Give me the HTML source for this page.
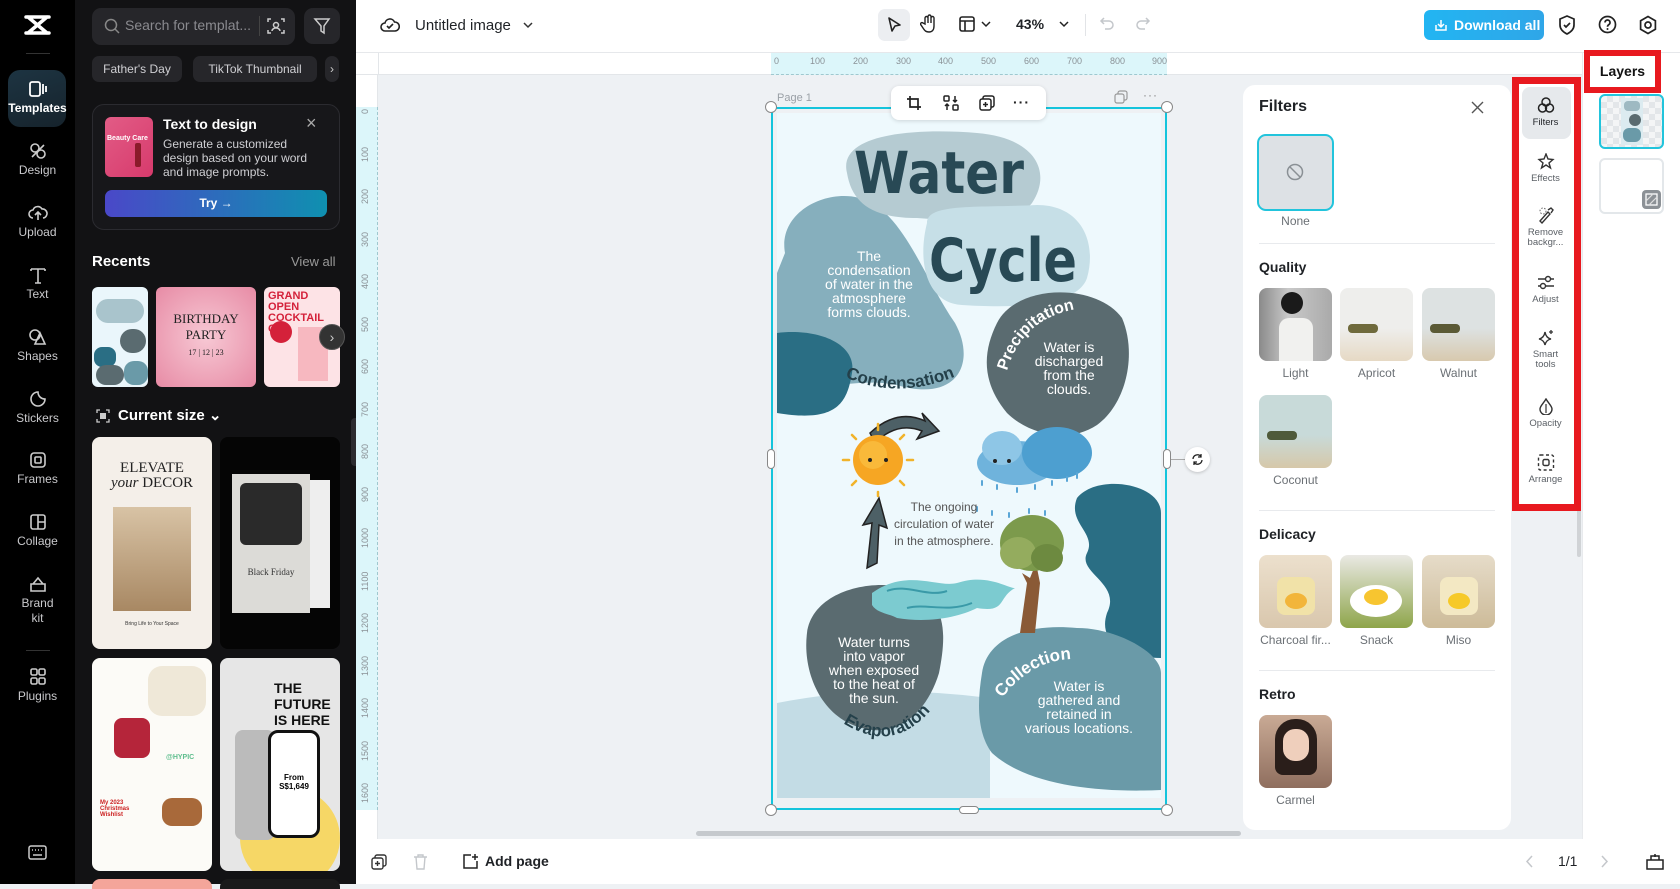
<!DOCTYPE html>
<html><head><meta charset="utf-8">
<style>
*{box-sizing:border-box;margin:0;padding:0}
body{width:1680px;height:884px;overflow:hidden;font-family:"Liberation Sans",sans-serif;background:#eef1f4;position:relative}
.a{position:absolute}
.rail{left:0;top:0;width:75px;height:884px;background:#000}
.nav{position:absolute;left:0;width:75px;text-align:center;color:#c9c9cc;font-size:12px}
.nav svg{display:block;margin:0 auto 3px}
.side{left:75px;top:0;width:281px;height:884px;background:#121214}
.chip{position:absolute;top:56px;height:26px;border-radius:7px;background:#26262a;color:#d0d0d4;font-size:12px;line-height:26px;text-align:center}
.top{left:356px;top:0;width:1324px;height:53px;background:#fff;border-bottom:1px solid #e6e8eb}
.bot{left:356px;top:839px;width:1324px;height:45px;background:#fff}
.fp{left:1243px;top:85px;width:268px;height:745px;background:#fff;border-radius:12px}
.lbl{position:absolute;font-size:12px;color:#6b7075;text-align:center;width:73px}
.th{position:absolute;width:73px;height:73px;border-radius:8px;overflow:hidden}
.h3{position:absolute;left:16px;font-size:14px;font-weight:bold;color:#1f2226}
.dv{position:absolute;left:16px;width:236px;height:1px;background:#e8eaed}
.tl{position:absolute;left:0;width:53px;text-align:center;font-size:9.5px;color:#5b6066;line-height:10px}
.tl svg{display:block;margin:0 auto 4px}
</style></head><body>

<!-- left rail -->
<div class="a rail">
  <svg class="a" style="left:24px;top:14px" width="27" height="22" viewBox="0 0 27 22"><path d="M2 3h23M2 19h23M4 3l19 16M23 3L4 19" stroke="#fff" stroke-width="3.5" fill="none" stroke-linecap="round"/></svg>
  <div class="a" style="left:26px;top:53px;width:24px;height:1px;background:#333"></div>
  <div class="a" style="left:8px;top:70px;width:58px;height:57px;border-radius:12px;background:linear-gradient(160deg,#1d3442,#16232c)"></div>
  <div class="nav" style="top:80px;color:#fff;font-weight:bold"><svg width="20" height="18" viewBox="0 0 20 18"><rect x="2" y="2" width="10" height="14" rx="2" stroke="#fff" stroke-width="1.8" fill="none"/><path d="M15 4v10M18 6v6" stroke="#fff" stroke-width="1.8"/></svg>Templates</div>
  <div class="nav" style="top:142px"><svg width="20" height="18" viewBox="0 0 20 18"><circle cx="7" cy="6" r="4" stroke="#ccc" stroke-width="1.6" fill="none"/><circle cx="13" cy="12" r="4" stroke="#ccc" stroke-width="1.6" fill="none"/><path d="M4 15l12-12" stroke="#ccc" stroke-width="1.6"/></svg>Design</div>
  <div class="nav" style="top:204px"><svg width="20" height="18" viewBox="0 0 20 18"><path d="M5 14a4 4 0 010-8 5 5 0 019-1 4 4 0 011 9M10 16V8M7 11l3-3 3 3" stroke="#ccc" stroke-width="1.6" fill="none"/></svg>Upload</div>
  <div class="nav" style="top:266px"><svg width="20" height="18" viewBox="0 0 20 18"><path d="M3 3h14M10 3v14M3 3v2M17 3v2M7 17h6" stroke="#ccc" stroke-width="1.6" fill="none"/></svg>Text</div>
  <div class="nav" style="top:328px"><svg width="20" height="18" viewBox="0 0 20 18"><circle cx="7" cy="7" r="5" stroke="#ccc" stroke-width="1.6" fill="none"/><path d="M12 5l5 11H7z" stroke="#ccc" stroke-width="1.6" fill="none"/></svg>Shapes</div>
  <div class="nav" style="top:390px"><svg width="20" height="18" viewBox="0 0 20 18"><path d="M10 2a7 7 0 107 7c-4 0-7-3-7-7z" stroke="#ccc" stroke-width="1.6" fill="none"/></svg>Stickers</div>
  <div class="nav" style="top:451px"><svg width="20" height="18" viewBox="0 0 20 18"><rect x="3" y="2" width="14" height="14" rx="3" stroke="#ccc" stroke-width="1.6" fill="none"/><rect x="7" y="6" width="6" height="6" rx="1" stroke="#ccc" stroke-width="1.6" fill="none"/></svg>Frames</div>
  <div class="nav" style="top:513px"><svg width="20" height="18" viewBox="0 0 20 18"><rect x="3" y="2" width="14" height="14" rx="2" stroke="#ccc" stroke-width="1.6" fill="none"/><path d="M10 2v14M10 9h7" stroke="#ccc" stroke-width="1.6"/></svg>Collage</div>
  <div class="nav" style="top:575px;line-height:15px"><svg width="20" height="18" viewBox="0 0 20 18"><path d="M3 9h14v7H3zM5 9l5-6 5 6" stroke="#ccc" stroke-width="1.6" fill="none"/></svg>Brand<br>kit</div>
  <div class="a" style="left:26px;top:650px;width:24px;height:1px;background:#333"></div>
  <div class="nav" style="top:668px"><svg width="20" height="18" viewBox="0 0 20 18"><rect x="3" y="1" width="6" height="6" rx="1.5" stroke="#ccc" stroke-width="1.6" fill="none"/><rect x="11" y="1" width="6" height="6" rx="1.5" stroke="#ccc" stroke-width="1.6" fill="none"/><rect x="3" y="10" width="6" height="6" rx="1.5" stroke="#ccc" stroke-width="1.6" fill="none"/><rect x="11" y="10" width="6" height="6" rx="1.5" stroke="#ccc" stroke-width="1.6" fill="none"/></svg>Plugins</div>
  <svg class="a" style="left:28px;top:845px" width="19" height="15" viewBox="0 0 19 15"><rect x="1" y="1" width="17" height="13" rx="2" stroke="#ccc" stroke-width="1.5" fill="none"/><path d="M4 5h1M7 5h1M10 5h1M13 5h1M5 10h9" stroke="#ccc" stroke-width="1.5"/></svg>
</div>

<!-- side panel -->
<div class="a side">
  <div class="a" style="left:17px;top:8px;width:203px;height:37px;border-radius:9px;background:#26262a"></div>
  <svg class="a" style="left:29px;top:18px" width="16" height="16" viewBox="0 0 16 16"><circle cx="7" cy="7" r="5.5" stroke="#888" stroke-width="1.5" fill="none"/><path d="M11 11l4 4" stroke="#888" stroke-width="1.5"/></svg>
  <div class="a" style="left:50px;top:17px;color:#8a8a8f;font-size:14px">Search for templat...</div>
  <div class="a" style="left:184px;top:16px;width:1px;height:20px;background:#444"></div>
  <svg class="a" style="left:192px;top:17px" width="18" height="18" viewBox="0 0 18 18"><path d="M1 5V2h3M14 2h3v3M17 13v3h-3M4 16H1v-3" stroke="#ccc" stroke-width="1.5" fill="none"/><circle cx="9" cy="8" r="2.5" stroke="#ccc" stroke-width="1.5" fill="none"/><path d="M5 14a4 3 0 018 0" stroke="#ccc" stroke-width="1.5" fill="none"/></svg>
  <div class="a" style="left:229px;top:8px;width:36px;height:36px;border-radius:9px;background:#26262a"></div>
  <svg class="a" style="left:238px;top:17px" width="18" height="18" viewBox="0 0 18 18"><path d="M2 2h14l-5 7v7l-3-2V9z" stroke="#ccc" stroke-width="1.5" fill="none"/></svg>
  <div class="chip" style="left:17px;width:90px">Father's Day</div>
  <div class="chip" style="left:118px;width:124px">TikTok Thumbnail</div>
  <div class="chip" style="left:250px;width:14px;color:#ccc">›</div>

  <div class="a" style="left:17px;top:104px;width:248px;height:126px;border-radius:12px;background:#17171a;border:1px solid #2b2b30">
    <div class="a" style="left:12px;top:12px;width:48px;height:60px;border-radius:6px;background:linear-gradient(135deg,#e25c86,#d73a6c)"><div style="color:#fff;font-size:7px;font-weight:bold;margin:18px 0 0 2px">Beauty Care</div><div class="a" style="left:30px;top:26px;width:6px;height:24px;background:#8a1b2a;border-radius:2px"></div></div>
    <div class="a" style="left:70px;top:11px;color:#fff;font-size:14px;font-weight:bold">Text to design</div>
    <div class="a" style="left:213px;top:8px;color:#aaa;font-size:18px">×</div>
    <div class="a" style="left:70px;top:32px;color:#cfcfd3;font-size:12px;line-height:14px;width:160px">Generate a customized design based on your word and image prompts.</div>
    <div class="a" style="left:12px;top:85px;width:222px;height:27px;border-radius:7px;background:linear-gradient(90deg,#4a48c8,#0f90b0);color:#fff;font-size:12px;font-weight:bold;text-align:center;line-height:27px">Try →</div>
  </div>

  <div class="a" style="left:17px;top:253px;color:#fff;font-size:15px;font-weight:bold">Recents</div>
  <div class="a" style="left:216px;top:254px;color:#999;font-size:13px">View all</div>
  <div class="a" style="left:17px;top:287px;width:56px;height:100px;border-radius:6px;background:#eaf6fb;overflow:hidden">
    <div class="a" style="left:4px;top:12px;width:48px;height:24px;background:#a9c4cc;border-radius:12px"></div><div class="a" style="left:2px;top:60px;width:22px;height:20px;background:#2a6e84;border-radius:8px"></div><div class="a" style="left:28px;top:42px;width:26px;height:24px;background:#5a6b70;border-radius:12px"></div><div class="a" style="left:4px;top:78px;width:28px;height:20px;background:#5a6b70;border-radius:10px"></div><div class="a" style="left:32px;top:74px;width:24px;height:24px;background:#6a9aa8;border-radius:10px"></div>
  </div>
  <div class="a" style="left:81px;top:287px;width:100px;height:100px;border-radius:6px;background:radial-gradient(#f7c8d4,#e78ba5);color:#222;font-size:13px;text-align:center;line-height:16px;padding-top:24px;font-family:'Liberation Serif',serif">BIRTHDAY<br>PARTY<br><span style="font-size:8px">17 | 12 | 23</span></div>
  <div class="a" style="left:189px;top:287px;width:76px;height:100px;border-radius:6px;background:#fde3e6;overflow:hidden"><div style="color:#d4213a;font-weight:bold;font-size:11px;line-height:11px;margin:4px">GRAND OPEN COCKTAIL CA</div><div class="a" style="left:6px;top:34px;width:22px;height:22px;border-radius:50%;background:#d4213a"></div><div class="a" style="left:34px;top:40px;width:30px;height:54px;background:#f7b8c0"></div></div>
  <div class="a" style="left:244px;top:324px;width:26px;height:26px;border-radius:50%;background:#333;border:1px solid #555;color:#ccc;text-align:center;line-height:24px;font-size:14px">›</div>

  <svg class="a" style="left:21px;top:409px" width="14" height="14" viewBox="0 0 14 14"><path d="M1 4V1h3M10 1h3v3M13 10v3h-3M4 13H1v-3" stroke="#ccc" stroke-width="1.3" fill="none"/><rect x="4" y="4" width="6" height="6" fill="#ccc"/></svg>
  <div class="a" style="left:43px;top:406px;color:#fff;font-size:15px;font-weight:bold">Current size ⌄</div>

  <div class="a" style="left:17px;top:437px;width:120px;height:212px;border-radius:8px;background:#f4efe9;text-align:center;overflow:hidden">
    <div style="font-family:'Liberation Serif',serif;font-size:15px;color:#222;margin-top:24px;line-height:15px">ELEVATE<br><i>your</i> DECOR</div>
    <div class="a" style="left:21px;top:70px;width:78px;height:104px;background:linear-gradient(#d8c3a5,#a88863)"></div>
    <div class="a" style="left:0;top:184px;width:120px;font-size:5px;color:#333">Bring Life to Your Space</div>
  </div>
  <div class="a" style="left:145px;top:437px;width:120px;height:212px;border-radius:8px;background:#050505;overflow:hidden">
    <div class="a" style="left:12px;top:37px;width:78px;height:139px;background:#dcdbd7"></div>
    <div class="a" style="left:90px;top:43px;width:20px;height:128px;background:#eee"></div>
    <div class="a" style="left:20px;top:46px;width:62px;height:62px;background:#2a2a2a;border-radius:6px"></div>
    <div class="a" style="left:12px;top:130px;width:78px;text-align:center;font-family:'Liberation Serif',serif;font-size:9px;color:#333">Black Friday</div>
  </div>
  <div class="a" style="left:17px;top:658px;width:120px;height:213px;border-radius:8px;background:#fcfbf7;overflow:hidden">
    <div class="a" style="left:56px;top:8px;width:58px;height:50px;background:#efe8d8;border-radius:14px"></div>
    <div class="a" style="left:22px;top:60px;width:36px;height:40px;background:#b5253a;border-radius:8px"></div>
    <div class="a" style="left:70px;top:140px;width:40px;height:28px;background:#a8693a;border-radius:10px"></div>
    <div class="a" style="left:8px;top:142px;color:#c22;font-size:6px;font-weight:bold">My 2023<br>Christmas<br>Wishlist</div>
    <div class="a" style="left:74px;top:96px;color:#5fbe8e;font-size:7px;font-weight:bold">@HYPIC</div>
  </div>
  <div class="a" style="left:145px;top:658px;width:120px;height:213px;border-radius:8px;background:#e6e6e6;overflow:hidden">
    <div class="a" style="left:54px;top:22px;color:#111;font-weight:bold;font-size:14px;line-height:16px">THE<br>FUTURE<br>IS HERE</div>
    <div class="a" style="left:20px;top:130px;width:100px;height:100px;border-radius:50%;background:#f6d766"></div>
    <div class="a" style="left:15px;top:72px;width:40px;height:110px;background:#bbb;border-radius:8px"></div>
    <div class="a" style="left:48px;top:72px;width:52px;height:108px;background:#fff;border:3px solid #111;border-radius:10px;font-size:8px;text-align:center;padding-top:40px;font-weight:bold">From<br>S$1,649</div>
  </div>
  <div class="a" style="left:17px;top:879px;width:120px;height:10px;border-radius:8px 8px 0 0;background:#f4a59a"></div>
  <div class="a" style="left:145px;top:879px;width:120px;height:10px;border-radius:8px 8px 0 0;background:#1a1a1a"></div>
  <div class="a" style="left:276px;top:418px;width:5px;height:48px;border-radius:4px 0 0 4px;background:#2b2b2f"></div>
</div>

<!-- layers panel -->
<div class="a" style="left:1582px;top:53px;width:98px;height:786px;background:#fff;border-left:1px solid #e8eaed"></div>

<!-- top bar -->
<div class="a top">
  <svg class="a" style="left:24px;top:16px" width="20" height="18" viewBox="0 0 20 18"><path d="M5 15a4 4 0 010-8 5 5 0 019.5-1A4 4 0 0115 15z" stroke="#222" stroke-width="1.6" fill="none"/><path d="M7 10l2 2 4-4" stroke="#222" stroke-width="1.6" fill="none"/></svg>
  <div class="a" style="left:59px;top:17px;font-size:15px;color:#1f2226">Untitled image</div>
  <svg class="a" style="left:167px;top:21px" width="10" height="8" viewBox="0 0 10 8"><path d="M1 2l4 4 4-4" stroke="#333" stroke-width="1.5" fill="none"/></svg>
  <div class="a" style="left:522px;top:9px;width:32px;height:32px;border-radius:7px;background:#eceef1"></div>
  <svg class="a" style="left:530px;top:16px" width="16" height="18" viewBox="0 0 16 18"><path d="M3 2l11 7-5 1-3 5z" stroke="#222" stroke-width="1.6" fill="none" stroke-linejoin="round"/></svg>
  <svg class="a" style="left:564px;top:14px" width="18" height="20" viewBox="0 0 18 20"><path d="M5 10V4a1.5 1.5 0 013 0v5V2.5a1.5 1.5 0 013 0V9V4a1.5 1.5 0 013 0v8c0 4-2 6-5 6s-4-1-6-4l-2-3a1.4 1.4 0 012-2z" stroke="#222" stroke-width="1.4" fill="none"/></svg>
  <svg class="a" style="left:603px;top:16px" width="16" height="16" viewBox="0 0 16 16"><rect x="1" y="1" width="14" height="14" rx="2" stroke="#222" stroke-width="1.6" fill="none"/><path d="M1 5h14M6 5v10" stroke="#222" stroke-width="1.6"/></svg>
  <svg class="a" style="left:625px;top:21px" width="10" height="7" viewBox="0 0 10 7"><path d="M1 1l4 4 4-4" stroke="#222" stroke-width="1.5" fill="none"/></svg>
  <div class="a" style="left:660px;top:16px;font-size:14px;color:#1f2226;font-weight:bold">43%</div>
  <svg class="a" style="left:703px;top:21px" width="10" height="7" viewBox="0 0 10 7"><path d="M1 1l4 4 4-4" stroke="#222" stroke-width="1.5" fill="none"/></svg>
  <div class="a" style="left:729px;top:14px;width:1px;height:22px;background:#e2e4e7"></div>
  <svg class="a" style="left:743px;top:16px" width="16" height="16" viewBox="0 0 16 16"><path d="M5 2L2 5l3 3M2 5h8a4 4 0 010 8H6" stroke="#c4c7cb" stroke-width="1.5" fill="none"/></svg>
  <svg class="a" style="left:779px;top:16px" width="16" height="16" viewBox="0 0 16 16"><path d="M11 2l3 3-3 3M14 5H6a4 4 0 000 8h4" stroke="#c4c7cb" stroke-width="1.5" fill="none"/></svg>
  <div class="a" style="left:1068px;top:10px;width:120px;height:30px;border-radius:6px;background:linear-gradient(90deg,#22b5f2,#2fa6e8);color:#fff;font-size:14px;font-weight:bold;line-height:30px;padding-left:30px">Download all</div>
  <svg class="a" style="left:1078px;top:18px" width="14" height="14" viewBox="0 0 14 14"><path d="M2 7v5h10V7M7 2v7M4 6l3 3 3-3" stroke="#fff" stroke-width="1.5" fill="none"/></svg>
  <svg class="a" style="left:1202px;top:15px" width="18" height="20" viewBox="0 0 18 20"><path d="M9 1l7 3v6c0 4-3 7-7 9-4-2-7-5-7-9V4z" stroke="#222" stroke-width="1.7" fill="none"/><path d="M6 10l2 2 4-4" stroke="#222" stroke-width="1.7" fill="none"/></svg>
  <svg class="a" style="left:1242px;top:15px" width="19" height="19" viewBox="0 0 19 19"><circle cx="9.5" cy="9.5" r="8" stroke="#222" stroke-width="1.7" fill="none"/><path d="M7 7.5a2.5 2.5 0 114 2c-1 .6-1.5 1-1.5 2.3" stroke="#222" stroke-width="1.7" fill="none"/><circle cx="9.5" cy="14" r="1" fill="#222"/></svg>
  <svg class="a" style="left:1282px;top:15px" width="20" height="20" viewBox="0 0 20 20"><path d="M10 1.5l7.4 4.25v8.5L10 18.5l-7.4-4.25v-8.5z" stroke="#222" stroke-width="1.7" fill="none"/><circle cx="10" cy="10" r="3" stroke="#222" stroke-width="1.7" fill="none"/></svg>
</div>

<!-- rulers -->
<div class="a" style="left:356px;top:53px;width:1226px;height:22px;background:#fff;border-bottom:1px solid #e3e6e9"></div>
<div class="a" style="left:378px;top:53px;width:1px;height:22px;background:#e3e6e9"></div>
<div class="a" style="left:771px;top:53px;width:396px;height:22px;background:#dcf6fa;border-bottom:1px dashed #9fc8cf"></div>
<div class="a" style="left:356px;top:75px;width:22px;height:764px;background:#fff;border-right:1px solid #e3e6e9"></div>
<div class="a" style="left:356px;top:107px;width:22px;height:703px;background:#dcf6fa;border-right:1px dashed #9fc8cf"></div>
<div class="a" style="left:774px;top:56px;font-size:9px;color:#8a9196;white-space:nowrap;word-spacing:0">
<span class="a" style="left:0">0</span><span class="a" style="left:36px">100</span><span class="a" style="left:79px">200</span><span class="a" style="left:122px">300</span><span class="a" style="left:164px">400</span><span class="a" style="left:207px">500</span><span class="a" style="left:250px">600</span><span class="a" style="left:293px">700</span><span class="a" style="left:336px">800</span><span class="a" style="left:378px">900</span></div>
<svg class="a" style="left:356px;top:100px" width="22" height="720" viewBox="0 0 22 720" font-family="Liberation Sans" font-size="9" fill="#8a9196">
<text transform="translate(12,14) rotate(-90)">0</text><text transform="translate(12,62) rotate(-90)">100</text><text transform="translate(12,104) rotate(-90)">200</text><text transform="translate(12,147) rotate(-90)">300</text><text transform="translate(12,189) rotate(-90)">400</text><text transform="translate(12,232) rotate(-90)">500</text><text transform="translate(12,274) rotate(-90)">600</text><text transform="translate(12,317) rotate(-90)">700</text><text transform="translate(12,359) rotate(-90)">800</text><text transform="translate(12,402) rotate(-90)">900</text><text transform="translate(12,448) rotate(-90)">1000</text><text transform="translate(12,491) rotate(-90)">1100</text><text transform="translate(12,533) rotate(-90)">1200</text><text transform="translate(12,576) rotate(-90)">1300</text><text transform="translate(12,618) rotate(-90)">1400</text><text transform="translate(12,661) rotate(-90)">1500</text><text transform="translate(12,703) rotate(-90)">1600</text></svg>

<!-- page -->
<div class="a" style="left:777px;top:92px;font-size:11px;color:#9aa0a6">Page 1</div>
<svg class="a" style="left:1114px;top:90px" width="14" height="14" viewBox="0 0 14 14"><rect x="4" y="1" width="9" height="9" rx="2" stroke="#999" stroke-width="1.2" fill="none"/><rect x="1" y="4" width="9" height="9" rx="2" stroke="#999" stroke-width="1.2" fill="#eef1f4"/></svg>
<div class="a" style="left:1143px;top:88px;font-size:12px;color:#888;letter-spacing:1px">···</div>

<div class="a" style="left:771px;top:107px;width:396px;height:703px;border:2px solid #14c4dc;background:#eef1f4"></div>
<svg class="a" style="left:777px;top:113px" width="384" height="685" viewBox="0 0 384 685" font-family="Liberation Sans">
<rect width="384" height="685" fill="#eef9fd"/>
<path d="M0 590 Q100 570 213 585 L213 685 L0 685Z" fill="#c3dce5"/>
<path d="M8 140 C0 95 60 70 95 90 C130 110 150 170 178 210 C200 250 180 290 120 272 C70 262 30 290 0 250 L0 160Z" fill="#86afbd"/>
<path d="M0 220 C40 215 80 230 75 260 C70 290 60 310 0 300Z" fill="#2a6e84"/>
<path d="M70 60 C60 20 140 15 200 20 C260 25 275 60 255 90 C240 110 180 108 140 105 C95 105 75 90 70 60Z" fill="#b5cbd2"/>
<path d="M150 110 C150 90 200 95 260 92 C305 92 320 130 310 165 C300 195 230 195 185 192 C150 190 140 150 150 110Z" fill="#c6dfe7"/>
<path d="M220 210 C240 170 320 170 345 205 C360 240 350 290 320 312 C290 332 250 320 230 300 C205 270 205 240 220 210Z" fill="#5a6b70"/>
<path d="M300 385 C320 360 384 370 384 400 L384 545 C350 545 320 530 330 500 C345 470 300 460 310 440 C320 420 290 410 300 385Z" fill="#2a6e84"/>
<path d="M205 560 C210 525 250 510 300 515 C340 515 384 540 384 560 L384 677 C320 680 250 672 215 640 C200 620 200 590 205 560Z" fill="#6a9aa8"/>
<path d="M30 520 C35 480 90 465 130 475 C170 485 170 520 162 560 C150 600 120 625 85 615 C45 605 25 560 30 520Z" fill="#5a6b70"/>
<text x="162" y="80" font-size="58" font-weight="bold" fill="#284955" text-anchor="middle" textLength="170" lengthAdjust="spacingAndGlyphs" font-family="DejaVu Sans">Water</text>
<text x="226" y="168" font-size="60" font-weight="bold" fill="#284955" text-anchor="middle" textLength="148" lengthAdjust="spacingAndGlyphs" font-family="DejaVu Sans">Cycle</text>
<g fill="#fff" font-size="14" text-anchor="middle"><text x="92" y="148">The</text><text x="92" y="162">condensation</text><text x="92" y="176">of water in the</text><text x="92" y="190">atmosphere</text><text x="92" y="204">forms clouds.</text></g>
<defs><path id="c1" d="M68 264 Q130 292 202 252"/><path id="c2" d="M230 258 Q248 196 320 194"/><path id="c3" d="M66 610 Q128 650 172 570"/><path id="c4" d="M225 585 Q260 540 310 547"/></defs>
<text font-size="17" font-weight="bold" fill="#24404a"><textPath href="#c1">Condensation</textPath></text>
<text font-size="16" font-weight="bold" fill="#fff"><textPath href="#c2">Precipitation</textPath></text>
<text font-size="17" font-weight="bold" fill="#24404a"><textPath href="#c3">Evaporation</textPath></text>
<text font-size="17" font-weight="bold" fill="#fff"><textPath href="#c4">Collection</textPath></text>
<g fill="#fff" font-size="14" text-anchor="middle"><text x="292" y="239">Water is</text><text x="292" y="253">discharged</text><text x="292" y="267">from the</text><text x="292" y="281">clouds.</text></g>
<g transform="translate(0,30)">
<path d="M93 290 Q120 265 148 278 L145 270 L162 288 L140 296 L145 288 Q120 278 98 300Z" fill="#4d6066" stroke="#222" stroke-width="1.5"/>
<circle cx="101" cy="317" r="25" fill="#f6a623"/><circle cx="96" cy="312" r="14" fill="#fbc74a" opacity=".6"/>
<circle cx="93" cy="317" r="2" fill="#222"/><circle cx="109" cy="317" r="2" fill="#222"/>
<g stroke="#f1b32a" stroke-width="2.5" stroke-linecap="round"><path d="M101 281v6M75 292l4 4M127 292l-4 4M66 317h6M136 317h-6M75 342l4-4M127 342l-4-4M101 353v-4"/></g>
<ellipse cx="240" cy="320" rx="40" ry="22" fill="#6fb3dc"/><ellipse cx="280" cy="310" rx="35" ry="26" fill="#4d9fd0"/><ellipse cx="225" cy="305" rx="20" ry="17" fill="#8ec6e6"/>
<circle cx="218" cy="318" r="2" fill="#222"/><circle cx="232" cy="318" r="2" fill="#222"/>
<g stroke="#5aa6d6" stroke-width="2" stroke-linecap="round"><path d="M205 338v4M220 342v4M240 345v4M258 342v4M275 338v4M290 334v4M300 330v5M200 364v4M215 368v4M232 370v4M252 366v4M268 368v4"/></g>
<g fill="#555" font-size="12" text-anchor="middle"><text x="167" y="368">The ongoing</text><text x="167" y="385">circulation of water</text><text x="167" y="402">in the atmosphere.</text></g>
</g>
<path d="M90 455 L95 410 L86 412 L102 385 L110 415 L102 412 L100 450Z" fill="#4d6066" stroke="#222" stroke-width="1.5"/>
<path d="M95 480 C130 455 160 475 180 470 C210 460 230 475 238 475 C220 485 230 500 200 495 C180 505 150 510 120 505 C110 500 100 500 95 492Z" fill="#7ccbd0"/>
<path d="M110 478 C130 470 150 485 170 478 M130 495 C150 490 170 500 195 490" stroke="#3a9aa8" stroke-width="2" fill="none"/>
<g transform="translate(55,0)">
<path d="M188 520 L195 470 L190 460 L198 465 L204 450 L208 470 L203 520Z" fill="#8a5a36"/>
<ellipse cx="200" cy="430" rx="32" ry="28" fill="#7c9a4c"/><ellipse cx="186" cy="440" rx="18" ry="16" fill="#94ac5e"/><ellipse cx="215" cy="445" rx="16" ry="14" fill="#6d8a40"/>
</g>
<g fill="#fff" font-size="14" text-anchor="middle"><text x="97" y="534">Water turns</text><text x="97" y="548">into vapor</text><text x="97" y="562">when exposed</text><text x="97" y="576">to the heat of</text><text x="97" y="590">the sun.</text></g>
<g fill="#fff" font-size="14" text-anchor="middle"><text x="302" y="578">Water is</text><text x="302" y="592">gathered and</text><text x="302" y="606">retained in</text><text x="302" y="620">various locations.</text></g>
</svg>
<!-- handles -->
<div class="a" style="left:765px;top:101px;width:12px;height:12px;border-radius:50%;background:#fff;border:1px solid #888"></div>
<div class="a" style="left:1161px;top:101px;width:12px;height:12px;border-radius:50%;background:#fff;border:1px solid #888"></div>
<div class="a" style="left:765px;top:804px;width:12px;height:12px;border-radius:50%;background:#fff;border:1px solid #888"></div>
<div class="a" style="left:1161px;top:804px;width:12px;height:12px;border-radius:50%;background:#fff;border:1px solid #888"></div>
<div class="a" style="left:767px;top:449px;width:8px;height:20px;border-radius:4px;background:#fff;border:1px solid #888"></div>
<div class="a" style="left:1163px;top:449px;width:8px;height:20px;border-radius:4px;background:#fff;border:1px solid #888"></div>
<div class="a" style="left:959px;top:806px;width:20px;height:8px;border-radius:4px;background:#fff;border:1px solid #888"></div>
<div class="a" style="left:1171px;top:459px;width:14px;height:1px;background:#aaa"></div>
<div class="a" style="left:1185px;top:447px;width:25px;height:25px;border-radius:50%;background:#fff;box-shadow:0 1px 3px rgba(0,0,0,.2)"></div>
<svg class="a" style="left:1191px;top:453px" width="13" height="13" viewBox="0 0 13 13"><path d="M2 6a4.5 4.5 0 018-2.5M11 7a4.5 4.5 0 01-8 2.5M10 1v3H7M3 12V9h3" stroke="#222" stroke-width="1.3" fill="none"/></svg>
<!-- floating toolbar -->
<div class="a" style="left:891px;top:86px;width:155px;height:34px;border-radius:8px;background:#fff;box-shadow:0 1px 4px rgba(0,0,0,.15)"></div>
<svg class="a" style="left:906px;top:95px" width="16" height="16" viewBox="0 0 16 16"><path d="M4 1v11h11M1 4h11v11" stroke="#222" stroke-width="1.7" fill="none"/></svg>
<svg class="a" style="left:943px;top:95px" width="16" height="16" viewBox="0 0 16 16"><rect x="1" y="1" width="5" height="5" rx="1" stroke="#222" stroke-width="1.5" fill="none"/><rect x="10" y="10" width="5" height="5" rx="1" stroke="#222" stroke-width="1.5" fill="none"/><path d="M12 1v6M10 5l2 2 2-2M4 15V9M2 11l2-2 2 2" stroke="#222" stroke-width="1.5" fill="none"/></svg>
<svg class="a" style="left:979px;top:95px" width="16" height="16" viewBox="0 0 16 16"><rect x="4" y="1" width="11" height="11" rx="2" stroke="#222" stroke-width="1.5" fill="none"/><rect x="1" y="4" width="11" height="11" rx="2" stroke="#222" stroke-width="1.5" fill="#fff"/><path d="M6.5 7v5M4 9.5h5" stroke="#222" stroke-width="1.5"/></svg>
<div class="a" style="left:1013px;top:94px;font-size:14px;font-weight:bold;color:#222;letter-spacing:1px">···</div>

<!-- scrollbars -->
<div class="a" style="left:696px;top:831px;width:545px;height:5px;border-radius:3px;background:#c5c9cd"></div>
<div class="a" style="left:1577px;top:262px;width:4px;height:295px;border-radius:2px;background:#d0d3d6"></div>

<!-- filters panel -->
<div class="a fp">
  <div class="a" style="left:16px;top:13px;font-size:16px;font-weight:bold;color:#1f2226">Filters</div>
  <svg class="a" style="left:228px;top:16px" width="13" height="13" viewBox="0 0 13 13"><path d="M1 1l11 11M12 1L1 12" stroke="#555" stroke-width="1.4"/></svg>
  <div class="a" style="left:14px;top:49px;width:77px;height:77px;border-radius:9px;background:#dde1e5;border:2px solid #22c4dc"></div>
  <svg class="a" style="left:43px;top:78px" width="18" height="18" viewBox="0 0 18 18"><circle cx="9" cy="9" r="7.5" stroke="#8a9095" stroke-width="1.5" fill="none"/><path d="M4 4l10 10" stroke="#8a9095" stroke-width="1.5"/></svg>
  <div class="lbl" style="left:16px;top:129px">None</div>
  <div class="dv" style="top:158px"></div>
  <div class="h3" style="top:174px">Quality</div>
  <div class="th" style="left:16px;top:203px;background:linear-gradient(90deg,#8a8a8a,#c9c9c9 40%,#aaa)"><div class="a" style="left:22px;top:4px;width:22px;height:22px;border-radius:50%;background:#1a1a1a"></div><div class="a" style="left:20px;top:30px;width:34px;height:43px;border-radius:10px 10px 0 0;background:#f1f1ef"></div></div>
  <div class="th" style="left:97px;top:203px;background:linear-gradient(#eeeeec 55%,#e6d9c4)"><div class="a" style="left:8px;top:36px;width:30px;height:9px;background:#6f6a3c;border-radius:4px"></div></div>
  <div class="th" style="left:179px;top:203px;background:linear-gradient(#dde2e2 55%,#d8c9ae)"><div class="a" style="left:8px;top:36px;width:30px;height:9px;background:#5b5a36;border-radius:4px"></div></div>
  <div class="lbl" style="left:16px;top:281px">Light</div><div class="lbl" style="left:97px;top:281px">Apricot</div><div class="lbl" style="left:179px;top:281px">Walnut</div>
  <div class="th" style="left:16px;top:310px;background:linear-gradient(#c8dad9 55%,#d6c8a9)"><div class="a" style="left:8px;top:36px;width:30px;height:9px;background:#4f5a3a;border-radius:4px"></div></div>
  <div class="lbl" style="left:16px;top:388px">Coconut</div>
  <div class="dv" style="top:425px"></div>
  <div class="h3" style="top:441px">Delicacy</div>
  <div class="th" style="left:16px;top:470px;background:linear-gradient(#ece0cd,#d9c7ad)"><div class="a" style="left:18px;top:22px;width:38px;height:38px;border-radius:8px;background:#f1e2a8"></div><div class="a" style="left:26px;top:38px;width:22px;height:16px;border-radius:50%;background:#f2b53a"></div></div>
  <div class="th" style="left:97px;top:470px;background:linear-gradient(#eae9e4,#8ea54a)"><div class="a" style="left:10px;top:30px;width:52px;height:32px;border-radius:50%;background:#fff"></div><div class="a" style="left:24px;top:34px;width:24px;height:16px;border-radius:50%;background:#f7c530"></div></div>
  <div class="th" style="left:179px;top:470px;background:linear-gradient(#e6dcc9,#cdbb99)"><div class="a" style="left:18px;top:22px;width:38px;height:38px;border-radius:8px;background:#f3e8c3"></div><div class="a" style="left:26px;top:38px;width:22px;height:16px;border-radius:50%;background:#f6c928"></div></div>
  <div class="lbl" style="left:16px;top:548px">Charcoal fir...</div><div class="lbl" style="left:97px;top:548px">Snack</div><div class="lbl" style="left:179px;top:548px">Miso</div>
  <div class="dv" style="top:585px"></div>
  <div class="h3" style="top:601px">Retro</div>
  <div class="th" style="left:16px;top:630px;background:linear-gradient(#c9aa95,#8f6e5e)"><div class="a" style="left:16px;top:4px;width:42px;height:56px;border-radius:20px 20px 8px 8px;background:#2a1e1a"></div><div class="a" style="left:24px;top:14px;width:26px;height:32px;border-radius:12px;background:#efcfbc"></div></div>
  <div class="lbl" style="left:16px;top:708px">Carmel</div>
</div>

<!-- tool rail -->
<div class="a" style="left:1512px;top:77px;width:69px;height:434px;border:7px solid #e8191f;background:#fff">
  <div class="a" style="left:3px;top:3px;width:49px;height:52px;border-radius:8px;background:#e6e9ec"></div>
  <div class="tl" style="top:13px;color:#1f2226"><svg width="18" height="17" viewBox="0 0 18 17"><circle cx="9" cy="5" r="4" stroke="#222" stroke-width="1.5" fill="none"/><circle cx="5.5" cy="11" r="4" stroke="#222" stroke-width="1.5" fill="none"/><circle cx="12.5" cy="11" r="4" stroke="#222" stroke-width="1.5" fill="none"/></svg>Filters</div>
  <div class="tl" style="top:69px"><svg width="18" height="17" viewBox="0 0 18 17"><path d="M9 1l2 5 5 .5-4 3.5 1.5 5L9 12l-4.5 3L6 10 2 6.5 7 6z" stroke="#333" stroke-width="1.4" fill="none"/></svg>Effects</div>
  <div class="tl" style="top:123px"><svg width="18" height="17" viewBox="0 0 18 17"><path d="M3 14l8-9 2 2-8 9zM11 3l3-2 2 2-2 3" stroke="#333" stroke-width="1.4" fill="none"/><circle cx="6" cy="4" r="3" stroke="#666" stroke-width="1" stroke-dasharray="1.5 1.5" fill="none"/></svg>Remove<br>backgr...</div>
  <div class="tl" style="top:190px"><svg width="18" height="17" viewBox="0 0 18 17"><path d="M1 5h16M1 12h16" stroke="#333" stroke-width="1.4"/><circle cx="11" cy="5" r="2.5" fill="#fff" stroke="#333" stroke-width="1.4"/><circle cx="6" cy="12" r="2.5" fill="#fff" stroke="#333" stroke-width="1.4"/></svg>Adjust</div>
  <div class="tl" style="top:245px"><svg width="18" height="17" viewBox="0 0 18 17"><path d="M8 3Q9 9 14 10 9 11 8 16 7 11 2 10 7 9 8 3z" stroke="#333" stroke-width="1.4" fill="none"/><path d="M14 1v4M12 3h4" stroke="#333" stroke-width="1.3"/></svg>Smart<br>tools</div>
  <div class="tl" style="top:314px"><svg width="18" height="17" viewBox="0 0 18 17"><path d="M9 1C6 6 3 8 3 11a6 6 0 0012 0c0-3-3-5-6-10z" stroke="#333" stroke-width="1.4" fill="none"/><path d="M9 6v9" stroke="#333" stroke-width="1.2"/></svg>Opacity</div>
  <div class="tl" style="top:370px"><svg width="18" height="17" viewBox="0 0 18 17"><rect x="1.5" y="1" width="15" height="15" rx="2" stroke="#333" stroke-width="1.4" stroke-dasharray="3 2.5" fill="none"/><rect x="6" y="5.5" width="6" height="6" rx="1.5" stroke="#333" stroke-width="1.4" fill="none"/></svg>Arrange</div>
</div>

<!-- layers -->
<div class="a" style="left:1584px;top:50px;width:77px;height:43px;border:6px solid #e8191f;background:#fff;font-size:14px;font-weight:bold;color:#111;text-align:center;line-height:31px">Layers</div>
<div class="a" style="left:1599px;top:94px;width:65px;height:55px;border-radius:6px;border:2px solid #22c4dc;background:repeating-conic-gradient(#e3e6e9 0 25%,#f4f5f6 0 50%) 0 0/12px 12px"></div>
<div class="a" style="left:1621px;top:98px;width:22px;height:47px;background:#dcebf0"><div class="a" style="left:3px;top:3px;width:16px;height:10px;background:#9eb9c2;border-radius:4px"></div><div class="a" style="left:8px;top:16px;width:12px;height:12px;background:#5a6b70;border-radius:6px"></div><div class="a" style="left:2px;top:30px;width:18px;height:14px;background:#6a9aa8;border-radius:6px"></div></div>
<div class="a" style="left:1599px;top:158px;width:65px;height:56px;border-radius:6px;border:2px solid #e3e7ea;background:#fff"></div>
<div class="a" style="left:1642px;top:190px;width:19px;height:19px;border-radius:4px;background:#8c9196"></div>
<svg class="a" style="left:1645px;top:193px" width="13" height="13" viewBox="0 0 13 13"><rect x="1" y="1" width="11" height="11" stroke="#fff" stroke-width="1.3" fill="none"/><path d="M1 8l7-7M4 12l8-8" stroke="#ddd" stroke-width="1.2"/></svg>

<!-- bottom bar -->
<div class="a bot">
  <svg class="a" style="left:15px;top:15px" width="16" height="16" viewBox="0 0 16 16"><rect x="4" y="1" width="11" height="11" rx="2" stroke="#333" stroke-width="1.4" fill="none"/><rect x="1" y="4" width="11" height="11" rx="2" stroke="#333" stroke-width="1.4" fill="#fff"/><path d="M6.5 7v5M4 9.5h5" stroke="#333" stroke-width="1.4"/></svg>
  <svg class="a" style="left:57px;top:14px" width="15" height="17" viewBox="0 0 15 17"><path d="M1 4h13M5 4V2h5v2M3 4l1 12h7l1-12" stroke="#c4c7cb" stroke-width="1.4" fill="none"/></svg>
  <svg class="a" style="left:106px;top:14px" width="17" height="17" viewBox="0 0 17 17"><path d="M9 2H2v13h13V8" stroke="#222" stroke-width="1.5" fill="none"/><path d="M13 1v6M10 4h6" stroke="#222" stroke-width="1.5"/></svg>
  <div class="a" style="left:129px;top:14px;font-size:14px;font-weight:bold;color:#1f2226">Add page</div>
  <svg class="a" style="left:1169px;top:16px" width="9" height="13" viewBox="0 0 9 13"><path d="M7 1L2 6.5 7 12" stroke="#c4c7cb" stroke-width="1.5" fill="none"/></svg>
  <div class="a" style="left:1202px;top:14px;font-size:14px;color:#1f2226">1/1</div>
  <svg class="a" style="left:1244px;top:16px" width="9" height="13" viewBox="0 0 9 13"><path d="M2 1l5 5.5L2 12" stroke="#c4c7cb" stroke-width="1.5" fill="none"/></svg>
  <svg class="a" style="left:1290px;top:14px" width="18" height="17" viewBox="0 0 18 17"><path d="M1 7h16v9H1zM5 7V3h8v4M9 1v3" stroke="#222" stroke-width="1.5" fill="none"/></svg>
</div>
</body></html>
